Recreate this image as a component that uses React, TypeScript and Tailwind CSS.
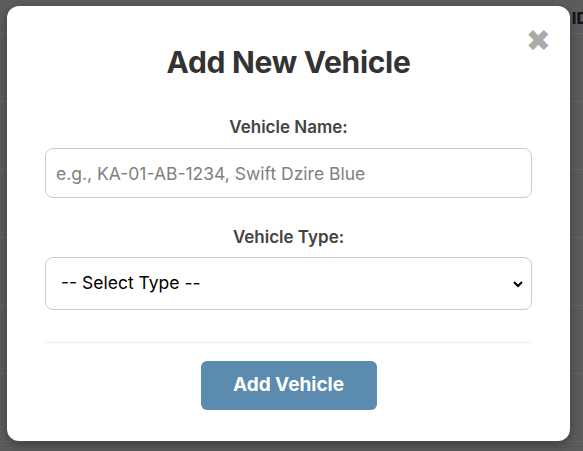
import React from "react";

export default function App() {
  const rows = [0, 1, 2, 3, 4, 5];
  return (
    <div className="relative w-[583px] h-[451px] overflow-hidden bg-[#5c5c5c]" style={{ fontFamily: "Inter, 'Noto Sans', sans-serif" }}>
      {/* underlying page (dimmed) */}
      <div className="flex flex-col">
        <div className="h-[34px] border-b border-[#666] flex justify-end">
          <span className="mt-[6px] mr-[-5px] text-[16px] font-extrabold text-[#0f1722]">ID</span>
        </div>
        {rows.map((r) => (
          <div key={r} className="h-[68px] border-b border-[#656565]" />
        ))}
      </div>

      {/* modal */}
      <div className="absolute left-[7px] top-[6px] w-[563px] h-[435px] bg-white rounded-[12px] shadow-[0_4px_12px_rgba(0,0,0,0.35)] px-[38px] pt-[36px] flex flex-col items-center">
        <span className="absolute right-[19px] top-[20px] text-[#aaaaaa] text-[30px] font-bold leading-none" style={{ fontFamily: "'DejaVu Sans', sans-serif" }}>✖</span>
        <h2 className="text-[30px] font-bold text-[#333] leading-[40px] tracking-[-0.3px]">Add New Vehicle</h2>
        <label className="mt-[35px] text-[17px] font-semibold text-[#444] leading-[20px]">Vehicle Name:</label>
        <input
          className="mt-[11px] w-full h-[50px] border border-[#cccccc] rounded-[8px] px-[10px] text-[17.5px] text-black placeholder:text-[#808080] outline-none"
          placeholder="e.g., KA-01-AB-1234, Swift Dzire Blue"
        />
        <label className="mt-[29px] text-[17px] font-semibold text-[#444] leading-[20px]">Vehicle Type:</label>
        <div className="mt-[10px] w-full h-[53px] border border-[#cccccc] rounded-[8px] flex items-center justify-between pl-[15px] pr-[7px]">
          <span className="text-[17.5px] text-black">-- Select Type --</span>
          <svg width="12" height="12" viewBox="0 0 12 12">
            <path d="M2 4l4 4 4-4" fill="none" stroke="#000" strokeWidth="2" />
          </svg>
        </div>
        <div className="mt-[32px] w-full border-t border-[#eeeeee]" />
        <button className="mt-[18px] w-[176px] h-[49px] bg-[#5b8bae] rounded-[6px] text-white text-[19px] font-bold">Add Vehicle</button>
      </div>
    </div>
  );
}
